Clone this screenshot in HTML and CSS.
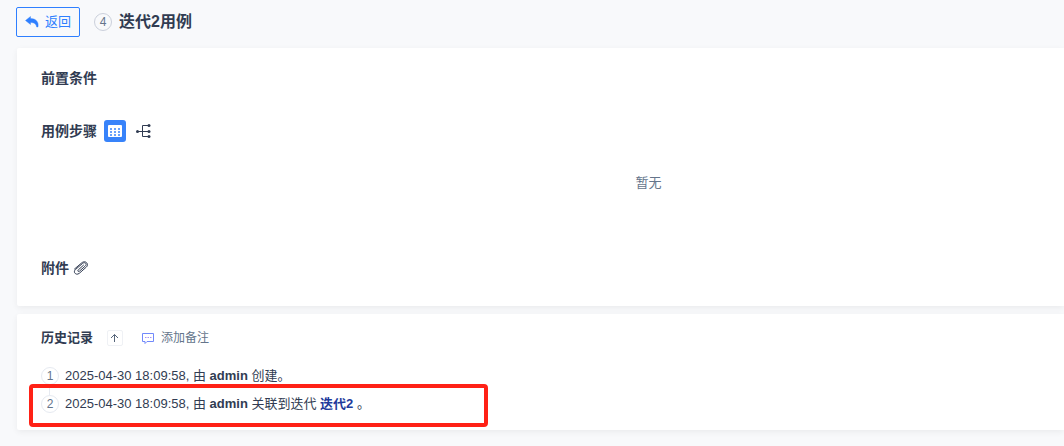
FILE: index.html
```
<!DOCTYPE html>
<html lang="zh-CN">
<head>
    <meta charset="UTF-8">
    <meta name="viewport" content="width=device-width, initial-scale=1.0">
    <title>迭代2用例</title>
    <link rel="stylesheet" href="styles.css">
</head>
<body>
    <header class="toolbar">
        <a class="back_btn" href="#">
            <svg width="14" height="12" viewBox="0 0 14 12"><path d="M5.500 0.500 0.500 4.500l5 4V6.500c3.400 0 5.400 1 6.200 4.500H13C14 5.500 10.500 2.500 5.500 2.500z" fill="#2e7fff" stroke="#2e7fff" stroke-width=".4" stroke-linejoin="round"/></svg>
            返回
        </a>
        <span class="circle case_id">4</span>
        <h1>迭代2用例</h1>
    </header>

    <main class="case_page">
        <section class="panel detail">
            <h2>前置条件</h2>
            <div class="title_row steps_row">
                <h2>用例步骤</h2>
                <button type="button" class="view_btn active" aria-label="表格">
                    <svg width="14" height="12" viewBox="0 0 14 12">
                        <rect width="14" height="12" rx="1" fill="#fff"/>
                        <path d="M2 3h2v2H2zM6 3h2v2H6zM10 3h2v2h-2zM2 6h2v2H2zM6 6h2v2H6zM10 6h2v2h-2zM2 9h2v2H2zM6 9h2v2H6zM10 9h2v2h-2z" fill="#3883fa" fill-opacity=".75"/>
                    </svg>
                </button>
                <button type="button" class="view_btn" aria-label="脑图">
                    <svg width="16" height="14" viewBox="0 0 16 14" fill="none" stroke="#313c52">
                        <path d="M1 7.500h12M12 1.500H6.500v11H12"/>
                        <g fill="#313c52" stroke="none"><circle cx="1.500" cy="7.500" r="1.500"/><circle cx="13" cy="1.500" r="1.500"/><circle cx="13" cy="7.500" r="1.500"/><circle cx="13" cy="12.500" r="1.500"/></g>
                    </svg>
                </button>
            </div>
            <p class="empty">暂无</p>
            <div class="title_row files_row">
                <h2>附件</h2>
                <svg width="16" height="14" viewBox="1 0 16 14" fill="none" stroke="#313c52" stroke-linecap="round"><path d="M11.500 4.200 6.200 9c-1 1 .2 2.100 1.200 1.200L13.300 5c2.200-2-.5-4.500-2.700-2.600L3.500 8.500c-3 2.700.7 6.400 3.800 3.800l7-6.200c3.300-3-1-7.300-4.500-4.300L2.500 8"/></svg>
            </div>
        </section>

        <section class="panel history">
            <div class="title_row history_head">
                <h3>历史记录</h3>
                <button type="button" class="sort_btn" aria-label="切换顺序">
                    <svg width="10" height="10" viewBox="0 0 10 10" fill="none" stroke="#56657a"><path d="M4.500 9V1.500M1 5l3.500-3.500L8 5"/></svg>
                </button>
                <button type="button" class="comment_btn">
                    <svg width="13" height="12" viewBox="0 0 13 12" fill="none" stroke="#7189fb"><path d="M.5 1.500h11v8H5l-2 2v-2H.5z"/><path d="M3 5.500h7" stroke="#a994f5" stroke-dasharray="1.500 1"/></svg>
                    添加备注
                </button>
            </div>
            <ol class="history_list">
                <li><span class="circle">1</span><span>2025-04-30 18:09:58, 由 <strong>admin</strong> 创建。</span></li>
                <li class="marked"><span class="circle">2</span><span>2025-04-30 18:09:58, 由 <strong>admin</strong> 关联到迭代 <a href="#">迭代2</a> 。</span></li>
            </ol>
        </section>
    </main>
</body>
</html>
```
FILE: styles.css
```
body {
    margin: 0;
    padding: 7px 0 16px 16px;
    background: #f8f9fb;
    color: #313c52;
    font-family: "Liberation Sans", "Noto Sans CJK SC", sans-serif;
    font-size: 13px;
    line-height: 20px;
}
h1, h2, h3, p, ol {
    margin: 0;
    padding: 0;
}
h1 {
    font-size: 16px;
    line-height: 24px;
}
h2 {
    font-size: 14px;
    line-height: 20px;
}
h3 {
    font-size: 13px;
    line-height: 20px;
}
button {
    padding: 0;
    border: none;
    background: none;
    font: inherit;
    cursor: pointer;
}
.toolbar {
    display: flex;
    align-items: center;
    margin-bottom: 11px;
}
.back_btn {
    display: flex;
    align-items: center;
    gap: 6px;
    padding: 4px 8px;
    border: 1px solid #2e7fff;
    border-radius: 2px;
    color: #2e7fff;
    text-decoration: none;
}
.circle {
    display: flex;
    align-items: center;
    justify-content: center;
    flex: none;
    box-sizing: border-box;
    width: 18px;
    height: 18px;
    border: 1px solid #e6eaf1;
    border-radius: 50%;
    background: #fff;
    color: #64758b;
    font-size: 12px;
}
.case_id {
    margin: 0 7px 0 14px;
    border-color: #cbd0db;
    background: none;
}

.case_page {
    display: flex;
    flex-direction: column;
    gap: 8px;
    margin-left: 1px;
}
.panel {
    padding: 20px 24px;
    border-radius: 2px 0 0 2px;
    background: #fff;
    box-shadow: 0 2px 6px rgba(0, 0, 0, 0.06);
}
.title_row {
    display: flex;
    align-items: center;
}
.steps_row {
    gap: 7px;
    margin-top: 32px;
}
.view_btn {
    display: flex;
    align-items: center;
    justify-content: center;
    width: 22px;
    height: 22px;
    border-radius: 3px;
}
.view_btn.active {
    background: #3883fa;
}
.empty {
    margin-top: 31px;
    padding-left: 216px;
    text-align: center;
    color: #64758b;
}
.files_row {
    gap: 4px;
    margin: 65px 0 8px;
}
.history {
    padding: 14px 24px 12px;
}
.sort_btn {
    display: flex;
    align-items: center;
    justify-content: center;
    width: 16px;
    height: 16px;
    margin: 0 19px 0 14px;
    border: 1px solid #eff1f5;
    border-radius: 2px;
}
.comment_btn {
    display: flex;
    align-items: center;
    gap: 6px;
    color: #64758b;
    font-size: 12px;
}
.history_list {
    margin-top: 14px;
    list-style: none;
}
.history_list li {
    position: relative;
    display: flex;
    align-items: center;
    gap: 6px;
    height: 28px;
}
.history_list li + li::before {
    content: "";
    position: absolute;
    top: -5px;
    left: 8px;
    height: 10px;
    border-left: 1px solid #e6eaf1;
}
.history_list a {
    color: #213a9b;
    font-weight: bold;
    text-decoration: none;
}
/* red frame over the record */
.marked::after {
    content: "";
    position: absolute;
    top: -6px;
    left: -12px;
    box-sizing: border-box;
    width: 459px;
    height: 43px;
    border: 4px solid #ff2116;
    border-radius: 4px;
    pointer-events: none;
}
```
